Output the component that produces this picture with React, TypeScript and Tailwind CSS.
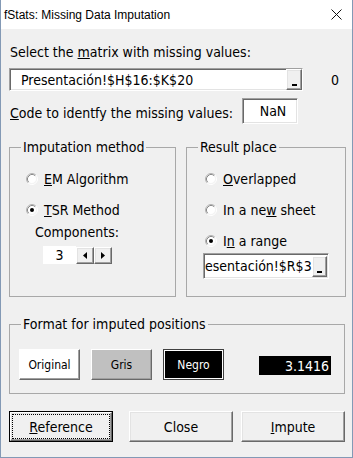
import React from "react";

const raised =
  "bg-[#f0f0f0] border border-t-white border-l-white border-b-[#696969] border-r-[#696969] shadow-[inset_-1px_-1px_0_#a0a0a0,inset_1px_1px_0_#e3e3e3]";
const sunken =
  "bg-white border border-t-[#a0a0a0] border-l-[#a0a0a0] border-b-white border-r-white shadow-[inset_1px_1px_0_#696969,inset_-1px_-1px_0_#e3e3e3]";

function RadioIcon({ checked }: { checked?: boolean }) {
  return (
    <svg width="12" height="12" viewBox="0 0 12 12" className="shrink-0">
      <circle cx="6" cy="6" r="4.5" fill="white" />
      <path d="M2.11 9.89 A5.5 5.5 0 0 1 9.89 2.11" fill="none" stroke="#b4b4b4" />
      <path d="M9.89 2.11 A5.5 5.5 0 0 1 2.11 9.89" fill="none" stroke="#ffffff" />
      <path d="M2.82 9.18 A4.5 4.5 0 0 1 9.18 2.82" fill="none" stroke="#8a8a8a" />
      <path d="M9.18 2.82 A4.5 4.5 0 0 1 2.82 9.18" fill="none" stroke="#f4f4f4" />
      {checked && <circle cx="6" cy="6" r="2" fill="black" />}
    </svg>
  );
}

function Radio({ checked, children }: { checked?: boolean; children: React.ReactNode }) {
  return (
    <div className="flex items-center h-[18px] gap-[6px]">
      <RadioIcon checked={checked} />
      <span>{children}</span>
    </div>
  );
}

function DotButton({ w, h }: { w: string; h: string }) {
  return (
    <div className={raised + " " + w + " " + h + " flex items-end justify-center pb-[3px] shrink-0"}>
      <div className="w-[5px] h-[2px] bg-black" />
    </div>
  );
}

export default function App() {
  return (
    <div className="w-[353px] h-[458px] flex flex-col bg-[#f0f0f0] border-x border-b border-[#8399b5] overflow-hidden text-black">
      <div className="h-[29px] shrink-0 bg-white flex items-center justify-between pl-[3px] pr-[10px] font-['Liberation_Sans',Arial,sans-serif] text-[12px]">
        <span>fStats: Missing Data Imputation</span>
        <svg width="11" height="11" viewBox="0 0 11 11">
          <path d="M0.5 0.5L10.5 10.5M10.5 0.5L0.5 10.5" stroke="#111" strokeWidth="1" />
        </svg>
      </div>

      <div className="flex-1 flex flex-col pl-[8px] font-['DejaVu_Sans_Condensed','DejaVu_Sans',sans-serif] font-stretch-condensed text-[14px] leading-[18px]">
        <div className="mt-[14px] h-[18px] pl-[1px]">
          Select the <u>m</u>atrix with missing values:
        </div>

        <div className="mt-[7px] flex items-center h-[23px]">
          <div className={sunken + " w-[294px] h-[23px] flex items-center justify-between pl-[11px]"}>
            <span>Presentación!$H$16:$K$20</span>
            <DotButton w="w-[16px]" h="h-[21px]" />
          </div>
          <span className="ml-[28px]">0</span>
        </div>

        <div className="mt-[7px] flex items-start h-[26px]">
          <div className="w-[233px] pl-[1px] mt-[6px]">
            <u>C</u>ode to identfy the missing values:
          </div>
          <div className={sunken + " w-[56px] h-[26px] flex items-center justify-center pl-[6px]"}>NaN</div>
        </div>

        <div className="mt-[14px] flex gap-[10px]">
          <fieldset className="w-[167px] h-[159px] border border-[#a8a8a8] min-w-0">
            <legend className="ml-[11px] px-[2px] leading-[18px]">Imputation method</legend>
            <div className="pt-[14px] pl-[16px] flex flex-col">
              <Radio>
                <u>E</u>M Algorithm
              </Radio>
              <div className="mt-[13px]">
                <Radio checked>
                  <u>T</u>SR Method
                </Radio>
              </div>
              <div className="mt-[4px] ml-[9px]">Components:</div>
              <div className="mt-[5px] ml-[17px] flex items-end">
                <div className="w-[33px] h-[18px] bg-white flex items-center justify-center">3</div>
                <div className={raised + " w-[18px] h-[17px] flex items-center justify-center"}>
                  <svg width="4" height="7" viewBox="0 0 4 7">
                    <path d="M4 0 L0 3.5 L4 7 Z" fill="black" />
                  </svg>
                </div>
                <div className={raised + " w-[18px] h-[17px] flex items-center justify-center"}>
                  <svg width="4" height="7" viewBox="0 0 4 7">
                    <path d="M0 0 L4 3.5 L0 7 Z" fill="black" />
                  </svg>
                </div>
              </div>
            </div>
          </fieldset>

          <fieldset className="w-[160px] h-[159px] border border-[#a8a8a8] min-w-0">
            <legend className="ml-[11px] px-[2px] leading-[18px]">Result place</legend>
            <div className="pt-[14px] pl-[16px] flex flex-col">
              <div className="ml-[2px]">
                <Radio>
                  <u>O</u>verlapped
                </Radio>
              </div>
              <div className="ml-[2px] mt-[13px]">
                <Radio>
                  In a ne<u>w</u> sheet
                </Radio>
              </div>
              <div className="ml-[2px] mt-[13px]">
                <Radio checked>
                  I<u>n</u> a range
                </Radio>
              </div>
              <div className={sunken + " mt-[3px] w-[126px] h-[26px] flex items-center justify-between pl-[1px] pr-[1px]"}>
                <span className="whitespace-nowrap overflow-hidden">esentación!$R$3</span>
                <DotButton w="w-[15px]" h="h-[21px]" />
              </div>
            </div>
          </fieldset>
        </div>

        <fieldset className="mt-[18px] w-[336px] h-[79px] border border-[#a8a8a8] min-w-0">
          <legend className="ml-[11px] px-[2px] leading-[18px]">Format for imputed positions</legend>
          <div className="pt-[16px] pl-[9px] flex items-center text-[12px]">
            <div className="w-[61px] h-[31px] bg-white border border-t-white border-l-white border-b-[#696969] border-r-[#696969] shadow-[inset_-1px_-1px_0_#a0a0a0] flex items-center justify-center">
              Original
            </div>
            <div className="ml-[11px] w-[61px] h-[31px] bg-[#c0c0c0] border border-t-white border-l-white border-b-[#696969] border-r-[#696969] shadow-[inset_-1px_-1px_0_#a0a0a0] flex items-center justify-center">
              Gris
            </div>
            <div className="ml-[11px] w-[61px] h-[31px] bg-black border border-[#404040] shadow-[inset_0_0_0_1px_#ffffff] flex items-center justify-center text-white">
              Negro
            </div>
            <div className="ml-[35px] mt-[2px] w-[72px] h-[19px] bg-black text-white text-[14px] flex items-center justify-end pr-[2px]">
              3.1416
            </div>
          </div>
        </fieldset>

        <div className="mt-[17px] flex">
          <div className="w-[104px] h-[31px] border border-black">
            <div className={raised + " w-full h-full p-[1px]"}>
              <div className="w-full h-full border border-dotted border-black flex items-center justify-center">
                <span>
                  <u>R</u>eference
                </span>
              </div>
            </div>
          </div>
          <div className={raised + " ml-[16px] w-[104px] h-[31px] flex items-center justify-center"}>Close</div>
          <div className={raised + " ml-[8px] w-[104px] h-[31px] flex items-center justify-center"}>
            <span>
              <u>I</u>mpute
            </span>
          </div>
        </div>
      </div>
    </div>
  );
}
